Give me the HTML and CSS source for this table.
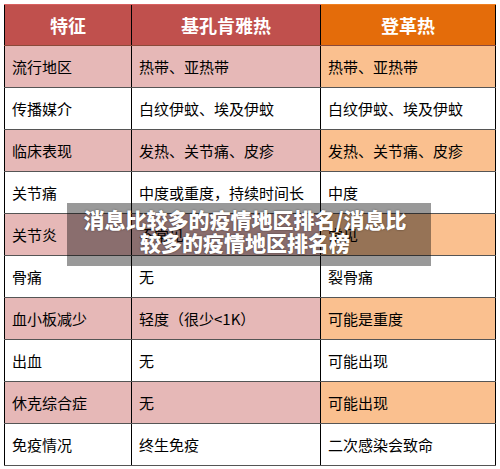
FILE: index.html
```html
<!DOCTYPE html>
<html lang="zh">
<head>
<meta charset="utf-8">
<link rel="stylesheet" href="styles.css">
</head>
<body>
<div class="wrap">
  <table class="grid">
    <colgroup><col class="c1"><col class="c2"><col class="c3"></colgroup>
    <thead>
      <tr class="head"><th class="hr">特征</th><th class="hr">基孔肯雅热</th><th class="ho">登革热</th></tr>
    </thead>
    <tbody>
      <tr class="alt"><td>流行地区</td><td>热带、亚热带</td><td>热带、亚热带</td></tr>
      <tr><td>传播媒介</td><td>白纹伊蚊、埃及伊蚊</td><td>白纹伊蚊、埃及伊蚊</td></tr>
      <tr class="alt"><td>临床表现</td><td>发热、关节痛、皮疹</td><td>发热、关节痛、皮疹</td></tr>
      <tr><td>关节痛</td><td>中度或重度，持续时间长</td><td>中度</td></tr>
      <tr class="alt"><td>关节炎</td><td>不常见</td><td>常见</td></tr>
      <tr><td>骨痛</td><td>无</td><td>裂骨痛</td></tr>
      <tr class="alt"><td>血小板减少</td><td>轻度（很少&lt;1K）</td><td>可能是重度</td></tr>
      <tr><td>出血</td><td>无</td><td>可能出现</td></tr>
      <tr class="alt"><td>休克综合症</td><td>无</td><td>可能出现</td></tr>
      <tr><td>免疫情况</td><td>终生免疫</td><td>二次感染会致命</td></tr>
    </tbody>
  </table>
  <div class="caption">消息比较多的疫情地区排名/消息比<br>较多的疫情地区排名榜</div>
</div>
</body>
</html>
```
FILE: styles.css
```css
html, body {
  margin: 0;
  padding: 0;
  background: #fff;
}
body {
  font-family: "Noto Sans CJK SC", "Noto Sans", sans-serif;
}
.wrap {
  position: relative;
  padding: 4px 0 0 4px;
}
.grid {
  border-collapse: collapse;
  table-layout: fixed;
  width: 492px;
  border: 1px solid #000;
}
.c1 { width: 127px; }
.c2 { width: 189px; }
.c3 { width: 175px; }
.head th {
  height: 40px;
  padding: 0;
  color: #fff;
  font-size: 18px;
  font-weight: bold;
  text-align: center;
  border-left: 1px solid #000;
  border-bottom: 1px solid #8a4a3a;
  border-top: 1px solid #d86060;
}
.head .hr { background: #c0504d; }
.head .ho { background: #e46c0a; border-top-color: #f08020; }
td {
  height: 41px;
  padding: 0 0 0 7px;
  font-size: 15px;
  color: #000;
  border-left: 1px solid #000;
  border-bottom: 1px solid #555;
  white-space: nowrap;
  overflow: hidden;
}
.alt td { background: #e6b8b7; }
.alt td:nth-child(3) { background: #fac08f; }
.caption {
  position: absolute;
  left: 67px;
  top: 203px;
  width: 336px;
  padding: 5px 18px 12px 10px;
  background: rgba(0, 0, 0, 0.4);
  color: #fff;
  font-size: 21px;
  font-weight: 900;
  line-height: 23px;
  text-align: center;
  white-space: nowrap;
  text-shadow: 0 0 2px rgba(0, 0, 0, 0.5);
}
```
